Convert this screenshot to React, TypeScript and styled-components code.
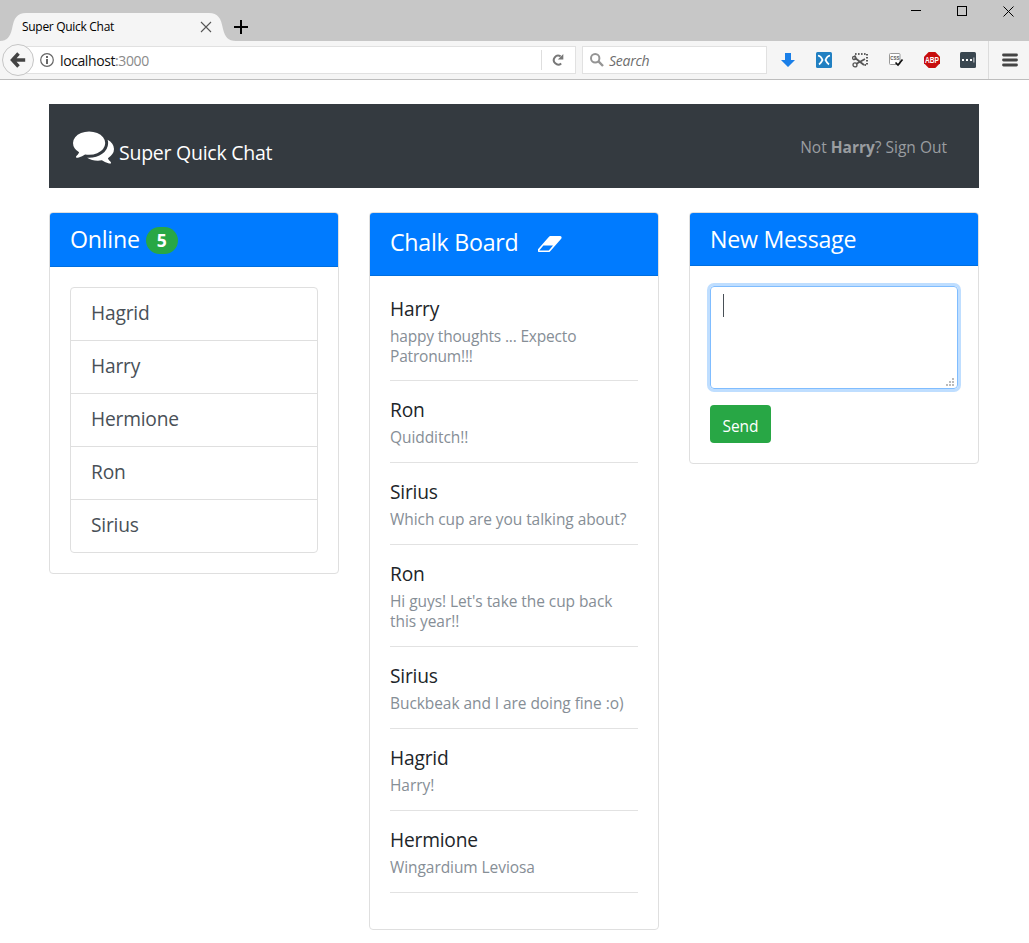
import React from "react";
import styled, { createGlobalStyle } from "styled-components";

const GlobalStyle = createGlobalStyle`
  *, *::before, *::after { box-sizing: border-box; }
  body {
    margin: 0;
    background: #fff;
    color: #212529;
    font-family: "Segoe UI", "Open Sans", "Noto Sans", sans-serif;
    font-size: 15.5px;
    overflow: hidden;
  }
  svg { display: block; flex: none; }
`;

/* ---------- browser window ---------- */

const TitleBar = styled.div`
  display: flex;
  align-items: flex-end;
  height: 41px;
  background: #c7c7c7;
`;

const Tab = styled.div`
  position: relative;
  display: flex;
  align-items: center;
  width: 232px;
  height: 28px;
  padding: 0 20px 0 22px;
  font-size: 12px;
  letter-spacing: -0.3px;
  color: #000;
`;

const TabShape = styled.svg`
  position: absolute;
  left: 0;
  top: 0;
`;

const TabTitle = styled.span`
  position: relative;
  flex: 1;
  margin-top: -1px;
  white-space: nowrap;
`;

const TabClose = styled.svg`
  position: relative;
`;

const NewTab = styled.svg`
  margin: 0 0 7px 2px;
`;

const WindowControls = styled.div`
  display: flex;
  align-self: flex-start;
  gap: 36px;
  margin: 6px 15px 0 auto;
`;

const Toolbar = styled.div`
  display: flex;
  align-items: center;
  height: 39px;
  background: #f5f5f5;
  border-bottom: 1px solid #bdbdbd;
`;

const BackButton = styled.div`
  position: relative;
  display: flex;
  align-items: center;
  justify-content: center;
  width: 32px;
  height: 32px;
  margin: 0 -16px 0 2px;
  border: 1px solid #c6c6c6;
  border-radius: 50%;
  background: #f7f7f7;
`;

const Field = styled.div<{ $width: number; $indent: number; $gap?: number }>`
  display: flex;
  align-items: center;
  width: ${(p) => p.$width}px;
  height: 28px;
  margin-left: ${(p) => p.$gap ?? 0}px;
  padding-left: ${(p) => p.$indent}px;
  border: 1px solid #e1e1e1;
  background: #fff;
`;

const Address = styled.span`
  flex: 1;
  margin-left: 6px;
  font-size: 14px;
  letter-spacing: -0.4px;
  color: #111;
`;

const Port = styled.span`
  color: #8a8a8a;
`;

const Reload = styled.div`
  display: flex;
  align-items: center;
  justify-content: center;
  width: 34px;
  height: 20px;
  padding-right: 2px;
  border-left: 1px solid #dedede;
`;

const SearchHint = styled.span`
  margin-left: 5px;
  font-size: 14px;
  font-style: italic;
  letter-spacing: -0.25px;
  color: #6d6d6d;
`;

const Extensions = styled.div`
  display: flex;
  align-items: center;
  gap: 20px;
  margin-left: 13px;
`;

const MenuButton = styled.div`
  display: flex;
  align-items: center;
  justify-content: center;
  width: 41px;
  height: 100%;
  margin-left: 12px;
  padding-left: 1px;
  border-left: 1px solid #dcdcdc;
`;

/* ---------- page ---------- */

const Page = styled.main`
  width: 930px;
  margin: 24px 0 0 49px;
`;

const Navbar = styled.header`
  display: flex;
  align-items: center;
  justify-content: space-between;
  height: 84px;
  padding: 2px 32px 0 24px;
  background: #343a40;
`;

const Brand = styled.div`
  display: flex;
  align-items: center;
  gap: 5px;
  color: #fff;
  font-size: 19.5px;
`;

const BrandName = styled.span`
  margin-top: 11px;
  letter-spacing: -0.25px;
`;

const SignOut = styled.span`
  color: #9a9da0;
`;

const Columns = styled.div`
  display: grid;
  grid-template-columns: repeat(3, 290px);
  gap: 30px;
  align-items: start;
  margin-top: 24px;
`;

const Card = styled.section`
  border: 1px solid #dfdfdf;
  border-radius: 4px;
  overflow: hidden;
`;

const CardHeader = styled.h4<{ $height: number; $lift?: number }>`
  display: flex;
  align-items: center;
  height: ${(p) => p.$height}px;
  margin: 0;
  padding: 0 20px ${(p) => p.$lift ?? 0}px;
  border-bottom: 1px solid #006fdf;
  background: #007bff;
  color: #fff;
  font-size: 23.2px;
  font-weight: 400;
  letter-spacing: -0.25px;
`;

const Badge = styled.span`
  display: flex;
  align-items: center;
  justify-content: center;
  width: 32px;
  height: 27px;
  margin: 2px 0 0 6px;
  border-radius: 14px;
  background: #28a745;
  font-size: 17.5px;
  font-weight: 700;
`;

const CardBody = styled.div<{ $bottom?: number }>`
  padding: 20px 20px ${(p) => p.$bottom ?? 20}px;
`;

const UserList = styled.ul`
  margin: 0;
  padding: 0;
  list-style: none;
  border: 1px solid #dfdfdf;
  border-radius: 4px;
`;

const User = styled.li`
  height: 53px;
  padding-left: 20px;
  border-bottom: 1px solid #dfdfdf;
  line-height: 50px;
  font-size: 19.2px;
  letter-spacing: -0.2px;
  color: #495057;

  &:last-child {
    height: 52px;
    border-bottom: 0;
  }
`;

const Message = styled.article`
  padding: 17px 0 15px;
  border-bottom: 1px solid #e2e2e2;

  &:first-child {
    padding: 1px 0 14px;
  }
`;

const Author = styled.h5`
  margin: 0 0 5px;
  font-size: 19.2px;
  font-weight: 400;
  line-height: 24px;
  letter-spacing: -0.2px;
`;

const MessageText = styled.p`
  margin: 0;
  line-height: 20px;
  letter-spacing: -0.07px;
  color: #868e96;

  ${Message}:first-child & {
    padding-top: 1px;
    line-height: 19.5px;
    letter-spacing: -0.18px;
  }
`;

const EraserIcon = styled.svg`
  margin: 4px 0 0 19px;
`;

const Composer = styled.div`
  display: flex;
  justify-content: space-between;
  height: 103px;
  padding: 7px 3px 2px 12px;
  border: 1px solid #80bdff;
  border-radius: 4px;
  box-shadow: 0 0 0 3px #bfdeff;
`;

const Caret = styled.span`
  width: 1px;
  height: 23px;
  background: #495057;
`;

const Grip = styled.svg`
  align-self: flex-end;
`;

const SendButton = styled.button`
  display: block;
  width: 61px;
  height: 38px;
  margin-top: 16px;
  padding: 3px 0 0;
  border: 0;
  border-radius: 4px;
  background: #28a745;
  color: #fff;
  font: inherit;
  letter-spacing: -0.1px;
`;

const users = ["Hagrid", "Harry", "Hermione", "Ron", "Sirius"];

const messages = [
  { author: "Harry", text: "happy thoughts ... Expecto Patronum!!!" },
  { author: "Ron", text: "Quidditch!!" },
  { author: "Sirius", text: "Which cup are you talking about?" },
  { author: "Ron", text: "Hi guys! Let's take the cup back this year!!" },
  { author: "Sirius", text: "Buckbeak and I are doing fine :o)" },
  { author: "Hagrid", text: "Harry!" },
  { author: "Hermione", text: "Wingardium Leviosa" },
];

const gripDots = [[6, 0], [3, 3], [6, 3], [0, 6], [3, 6], [6, 6]];

function BrowserChrome() {
  return (
    <>
      <TitleBar>
        <Tab>
          <TabShape width="236" height="28" viewBox="0 0 236 28">
            <path d="M0 28C7 28 10 24 12 16C14 5 17 0 26 0H209C218 0 221 5 223 16C225 24 228 28 236 28Z" fill="#f5f5f5" />
          </TabShape>
          <TabTitle>Super Quick Chat</TabTitle>
          <TabClose width="12" height="12" viewBox="0 0 12 12">
            <path d="M1 1L11 11M11 1L1 11" stroke="#555" strokeWidth="1.1" />
          </TabClose>
        </Tab>
        <NewTab width="14" height="14" viewBox="0 0 14 14">
          <path d="M0 7H14M7 0V14" stroke="#000" strokeWidth="2" />
        </NewTab>
        <WindowControls>
          <svg width="10" height="11" viewBox="0 0 10 11"><path d="M0 4.5H10" stroke="#000" /></svg>
          <svg width="10" height="11" viewBox="0 0 10 11"><rect x=".5" y=".5" width="9" height="9" fill="none" stroke="#000" /></svg>
          <svg width="11" height="11" viewBox="0 0 11 11"><path d="M.5 .5L10.5 10.5M10.5 .5L.5 10.5" stroke="#000" /></svg>
        </WindowControls>
      </TitleBar>
      <Toolbar>
        <BackButton>
          <svg width="16" height="16" viewBox="0 0 16 16">
            <path d="M8.5 1.5L2.5 8L8.5 14.5M3 8H15.200" fill="none" stroke="#444" strokeWidth="3.5" />
          </svg>
        </BackButton>
        <Field $width={558} $indent={21}>
          <svg width="14" height="14" viewBox="0 0 14 14">
            <circle cx="7" cy="7" r="6.3" fill="none" stroke="#666" strokeWidth="1.2" />
            <path d="M6 3h2v2H6zM6 6h2v5H6z" fill="#666" />
          </svg>
          <Address>localhost<Port>:3000</Port></Address>
          <Reload>
            <svg width="12" height="12" viewBox="0 0 12 12">
              <path d="M9.2 9.4A4.4 4.4 0 1 1 8.6 2.4" fill="none" stroke="#777" strokeWidth="2" />
              <path d="M11.3 0V5.6H5.8Z" fill="#777" />
            </svg>
          </Reload>
        </Field>
        <Field $width={185} $indent={7} $gap={6}>
          <svg width="14" height="14" viewBox="0 0 14 14">
            <circle cx="5.2" cy="5.2" r="4.2" fill="none" stroke="#949494" strokeWidth="2" />
            <path d="M8.2 8.2L13 13" stroke="#949494" strokeWidth="2.4" />
          </svg>
          <SearchHint>Search</SearchHint>
        </Field>
        <Extensions>
          <svg width="16" height="16" viewBox="0 0 16 16">
            <path d="M5 1H11V8H15L8 15L1 8H5Z" fill="#1a7fe8" />
          </svg>
          <svg width="16" height="16" viewBox="0 0 16 16">
            <rect width="16" height="16" rx="1.5" fill="#2180c2" />
            <path d="M2 3.500Q5 4 6.500 8Q5 11 3 12.500M14 3.500Q11 4 9.500 8Q11 11 13 12.500" fill="none" stroke="#fff" strokeWidth="1.7" />
          </svg>
          <svg width="16" height="16" viewBox="0 0 16 16">
            <path d="M3 5V2H15V13H11" fill="none" stroke="#333" strokeWidth="1.6" strokeDasharray="1.6 1.4" />
            <path d="M2.500 5.500L12 13M4 12L13 7" stroke="#555" strokeWidth="1.8" />
            <circle cx="2.300" cy="6" r="1.700" fill="none" stroke="#555" strokeWidth="1.300" />
            <circle cx="3" cy="12.900" r="2" fill="none" stroke="#555" strokeWidth="1.300" />
          </svg>
          <svg width="16" height="16" viewBox="0 0 16 16">
            <rect x="1.500" y="1.500" width="10.500" height="11" rx="1" fill="#fff" stroke="#999" />
            <text x="2.300" y="8" fontSize="5" fontWeight="700" fill="#555" fontFamily="Liberation Sans, sans-serif" textLength="9" lengthAdjust="spacingAndGlyphs">CSS</text>
            <path d="M7.500 10.500L10 13L14.500 7.500" fill="none" stroke="#111" strokeWidth="1.700" />
          </svg>
          <svg width="16" height="16" viewBox="0 0 16 16">
            <path d="M4.700 0H11.300L16 4.700V11.300L11.300 16H4.700L0 11.300V4.700Z" fill="#c70d0d" />
            <text x="1" y="11" fontSize="8.500" fontWeight="700" fill="#fff" fontFamily="Liberation Sans Narrow, Liberation Sans, sans-serif" textLength="14" lengthAdjust="spacingAndGlyphs">ABP</text>
          </svg>
          <svg width="16" height="16" viewBox="0 0 16 16">
            <rect width="16" height="16" rx="1.500" fill="#3a4750" />
            <path d="M2 7H4V9H2zM6 7H8V9H6zM10 7H12V9H10zM13.500 5.500H14.300V10.500H13.500z" fill="#fff" />
          </svg>
        </Extensions>
        <MenuButton>
          <svg width="16" height="14" viewBox="0 0 16 14">
            <path d="M1.500 2H14.500M1.500 7H14.500M1.500 12H14.500" stroke="#444" strokeWidth="2.800" strokeLinecap="round" />
          </svg>
        </MenuButton>
      </Toolbar>
    </>
  );
}

export default function App() {
  return (
    <>
      <GlobalStyle />
      <BrowserChrome />
      <Page>
        <Navbar>
          <Brand>
            <svg width="41" height="33" viewBox="0 240 1792 1440">
              <path fill="#fff" d="M1408 768q0 139-94 257t-256.500 186.500-353.500 68.500q-86 0-176-16-124 88-278 128-36 9-86 16h-3q-11 0-20.500-8t-11.500-21q-1-3-1-6.500t.5-6.500 2-6l2.500-5 3.500-5.500 4-5 4.500-5 4-4.500q5-6 23-25t26-29.500 22.500-29 25-38.500 20.500-44q-124-72-195-177t-71-224q0-139 94-257t256.500-186.500 353.500-68.500 353.500 68.500 256.500 186.500 94 257zm384 256q0 120-71 224.500t-195 176.500q10 24 20.500 44t25 38.500 22.500 29 26 29.500 23 25q1 1 4 4.500t4.500 5 4 5 3.500 5.500l2.500 5 2 6 .5 6.500-1 6.500q-3 14-13 22t-22 7q-50-7-86-16-154-40-278-128-90 16-176 16-271 0-472-132 58 4 88 4 161 0 309-45t264-129q125-92 192-212t67-254q0-77-23-152 129 71 204 178t75 230z" />
            </svg>
            <BrandName>Super Quick Chat</BrandName>
          </Brand>
          <SignOut>Not <b>Harry</b>? Sign Out</SignOut>
        </Navbar>
        <Columns>
          <Card>
            <CardHeader $height={54} $lift={1}>Online<Badge>5</Badge></CardHeader>
            <CardBody>
              <UserList>
                {users.map((name) => <User key={name}>{name}</User>)}
              </UserList>
            </CardBody>
          </Card>
          <Card>
            <CardHeader $height={63} $lift={5}>
              Chalk Board
              <EraserIcon width="24" height="16" viewBox="0 256 1856 1280">
                <path fill="#fff" d="M832 1408l336-384h-768l-336 384h768zm1013-1077q15 34 9.500 71.500t-30.500 65.500l-896 1024q-38 44-96 44h-768q-38 0-69.500-20.500t-47.500-54.500q-15-34-9.500-71.500t30.500-65.500l896-1024q38-44 96-44h768q38 0 69.500 20.500t47.500 54.500z" />
              </EraserIcon>
            </CardHeader>
            <CardBody $bottom={36}>
              {messages.map((m, i) => (
                <Message key={i}>
                  <Author>{m.author}</Author>
                  <MessageText>{m.text}</MessageText>
                </Message>
              ))}
            </CardBody>
          </Card>
          <Card>
            <CardHeader $height={53}>New Message</CardHeader>
            <CardBody>
              <Composer role="textbox">
                <Caret />
                <Grip width="8" height="8" viewBox="0 0 8 8" shapeRendering="crispEdges">
                  {gripDots.map(([x, y]) => <rect key={`${x}-${y}`} x={x} y={y} width="2" height="2" fill="#bbb" />)}
                </Grip>
              </Composer>
              <SendButton>Send</SendButton>
            </CardBody>
          </Card>
        </Columns>
      </Page>
    </>
  );
}
